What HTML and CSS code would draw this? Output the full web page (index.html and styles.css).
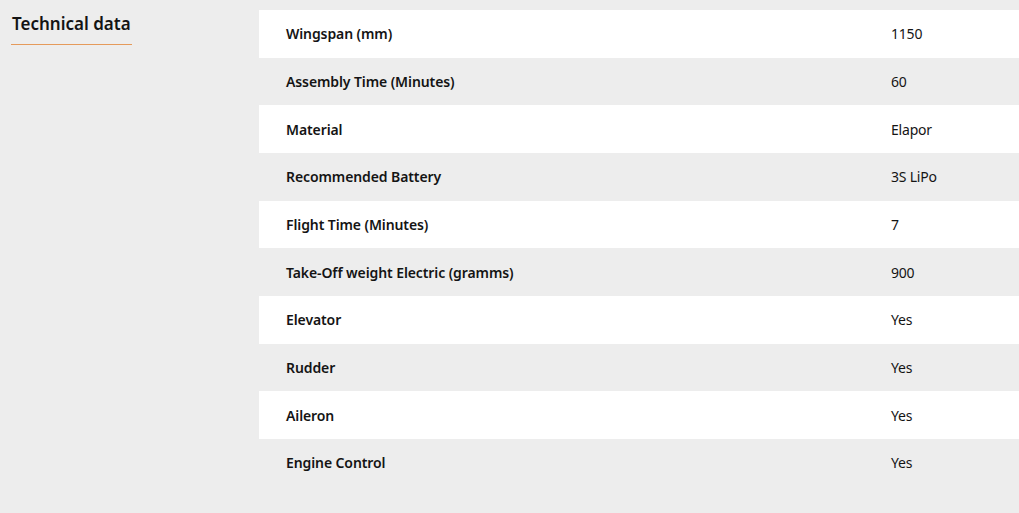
FILE: index.html
```html
<!DOCTYPE html>
<html>
<head>
<meta charset="utf-8">
<link rel="stylesheet" href="styles.css">
</head>
<body>
<div class="page">
  <aside class="side">
    <h2 class="title">Technical data</h2>
  </aside>
  <table class="spec">
    <tbody>
      <tr><td class="k">Wingspan (mm)</td><td class="v">1150</td></tr>
      <tr><td class="k">Assembly Time (Minutes)</td><td class="v">60</td></tr>
      <tr><td class="k">Material</td><td class="v">Elapor</td></tr>
      <tr><td class="k">Recommended Battery</td><td class="v">3S LiPo</td></tr>
      <tr><td class="k">Flight Time (Minutes)</td><td class="v">7</td></tr>
      <tr><td class="k">Take-Off weight Electric (gramms)</td><td class="v">900</td></tr>
      <tr><td class="k">Elevator</td><td class="v">Yes</td></tr>
      <tr><td class="k">Rudder</td><td class="v">Yes</td></tr>
      <tr><td class="k">Aileron</td><td class="v">Yes</td></tr>
      <tr><td class="k">Engine Control</td><td class="v">Yes</td></tr>
    </tbody>
  </table>
</div>
</body>
</html>
```
FILE: styles.css
```css
html, body {
  margin: 0;
  padding: 0;
  background: #ededed;
}
body {
  font-family: "Noto Sans", "Open Sans", sans-serif;
  color: #141414;
}
.page {
  display: flex;
  align-items: flex-start;
}
.side {
  width: 259px;
  flex: none;
  padding-left: 11px;
  box-sizing: border-box;
}
.title {
  display: inline-block;
  margin: 12px 0 0;
  padding: 0 0 9px 1px;
  width: 121px;
  box-sizing: border-box;
  font-size: 17px;
  font-weight: 600;
  line-height: 23px;
  letter-spacing: 0;
  border-bottom: 1px solid #e59a5b;
}
.spec {
  margin-top: 10px;
  width: 760px;
  border-collapse: collapse;
  font-size: 14px;
}
.spec tr {
  height: 47.67px;
}
.spec tr:nth-child(odd) {
  background: #ffffff;
}
.spec td {
  padding: 0;
  vertical-align: middle;
}
.k {
  padding-left: 27px !important;
  width: 605px;
  font-weight: 600;
  letter-spacing: -0.1px;
}
.v {
  font-weight: 400;
  letter-spacing: -0.2px;
}
```
